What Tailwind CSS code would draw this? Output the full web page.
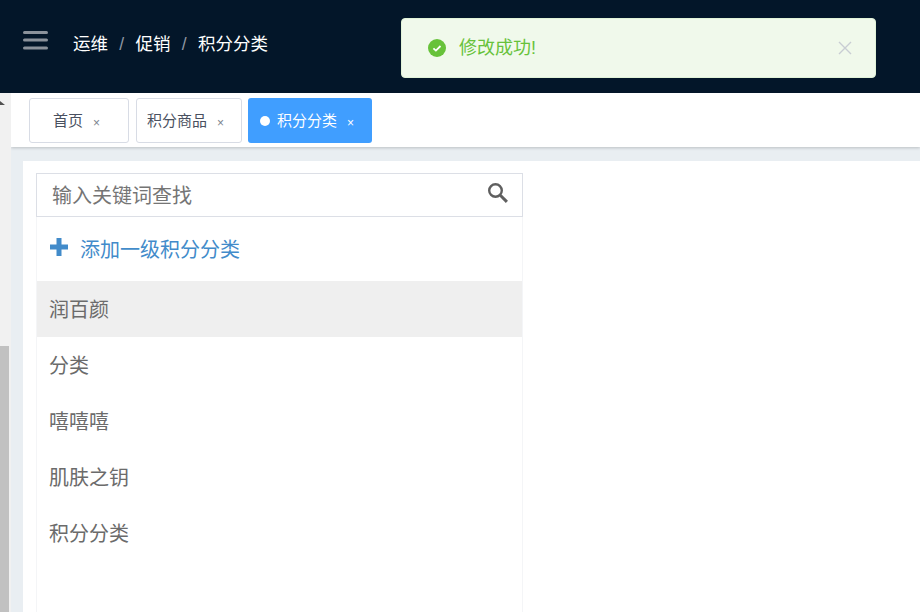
<!DOCTYPE html>
<html lang="zh-CN">
  <head>
    <meta charset="UTF-8" />
    <script src="https://cdn.jsdelivr.net/npm/@tailwindcss/browser@4"></script>
    <title>积分分类</title>
  </head>
  <body class="w-[920px] h-[612px] overflow-hidden bg-white font-['Liberation_Sans','Noto_Sans_CJK_SC',sans-serif]">
    <!-- Header -->
    <header class="relative h-[93px] bg-[#031629] flex items-start pt-[30px] pl-[23px]">
      <svg class="w-[25px] h-[20px] shrink-0" viewBox="0 0 25 20" fill="#8b929b">
        <rect x="0" y="1" width="25" height="3" rx="1.5" />
        <rect x="0" y="8.5" width="25" height="3" rx="1.5" />
        <rect x="0" y="16.5" width="25" height="3" rx="1.5" />
      </svg>
      <nav class="ml-[25px] mt-[2px] flex items-center h-[24px] text-[17.5px] text-white">
        <span>运维</span>
        <span class="text-[#8f98a3] w-[27.5px] text-center">/</span>
        <span>促销</span>
        <span class="text-[#8f98a3] w-[27.5px] text-center">/</span>
        <span>积分分类</span>
      </nav>
      <!-- Toast -->
      <div class="absolute left-[401px] top-[18px] w-[475px] h-[60px] rounded bg-[#f0f9eb] border border-[#e1f3d8] flex items-center pl-[26px] pr-[23px]">
        <svg class="w-[18px] h-[18px] shrink-0" viewBox="0 0 18 18">
          <circle cx="9" cy="9" r="9" fill="#67c23a" />
          <path d="M5.4 9.3l2.5 2.3 4.6-4.6" fill="none" stroke="#fff" stroke-width="1.8" />
        </svg>
        <span class="ml-[13px] text-[18px] leading-none text-[#67c23a]">修改成功!</span>
        <svg class="ml-auto w-[14px] h-[14px] shrink-0" viewBox="0 0 14 14" stroke="#c8cdd3" stroke-width="1.4">
          <path d="M1 1l12 12M13 1L1 13" />
        </svg>
      </div>
    </header>

    <div class="flex h-[519px]">
      <!-- Page scrollbar -->
      <div class="relative w-[11px] shrink-0 bg-[#f1f1f1]">
        <svg class="absolute left-0 top-[8px] w-[5px] h-[4px]" viewBox="0 0 5 4" fill="#505050">
          <path d="M0 4V0l5 4z" />
        </svg>
        <div class="absolute left-0 top-[253px] bottom-0 w-[9px] bg-[#c1c1c1]"></div>
      </div>

      <div class="flex-1 min-w-0 flex flex-col bg-[#e9eef2]">
        <!-- Tabs -->
        <div class="h-[54px] shrink-0 bg-white shadow-[0_1px_3px_rgba(0,0,0,0.2)] flex items-start pt-[5px] pl-[18px] gap-[7px] text-[15px]">
          <div class="w-[100px] h-[45px] rounded-[3px] border border-[#d8dce5] flex items-center pl-[23px] pt-[2px] text-[#495060]">
            <span>首页</span><span class="ml-[10px] text-[12px] translate-y-[1px] text-[#7b828e]">×</span>
          </div>
          <div class="w-[106px] h-[45px] rounded-[3px] border border-[#d8dce5] flex items-center pl-[10px] pt-[2px] text-[#495060]">
            <span>积分商品</span><span class="ml-[10px] text-[12px] translate-y-[1px] text-[#7b828e]">×</span>
          </div>
          <div class="w-[124px] h-[45px] -ml-[1px] rounded-[3px] bg-[#409eff] flex items-center pl-[12px] pt-[2px] text-white">
            <span class="w-[10px] h-[10px] rounded-full bg-white -translate-y-[1px]"></span>
            <span class="ml-[7px]">积分分类</span><span class="ml-[10px] text-[12px] translate-y-[1px]">×</span>
          </div>
        </div>

        <!-- Content -->
        <main class="flex-1 min-h-0 mt-[14px] ml-[12px] bg-white pt-[12px] pl-[13px]">
          <div class="w-[487px]">
            <div class="h-[44px] border border-[#dcdfe6] flex items-center pl-[15px] pr-[13px] pt-[1px] text-[#757575] text-[20px]">
              <span>输入关键词查找</span>
              <svg class="ml-auto w-[22px] h-[22px] -translate-y-[3px]" viewBox="0 0 22 22" fill="none" stroke="#5f5f5f">
                <circle cx="8.5" cy="8.5" r="6.3" stroke-width="2.4" />
                <path d="M13.3 13.3l6.6 6.6" stroke-width="3" />
              </svg>
            </div>
            <div class="h-[400px] border-x border-[#f4f5f7]">
              <div class="h-[64px] flex items-center pl-[12px] pt-[1px] text-[#428bca] text-[20px]">
                <svg class="w-[20px] h-[20px] shrink-0 -translate-y-[3px]" viewBox="0 0 20 20" fill="#428bca">
                  <path d="M7.5 1h5v6.5H19v5h-6.5V19h-5v-6.5H1v-5h6.5z" />
                </svg>
                <span class="ml-[11px]">添加一级积分分类</span>
              </div>
              <ul class="text-[20px] text-[#6b6b6b]">
                <li class="h-[56px] flex items-center pl-[12px] pt-[1px] bg-[#efefef]">润百颜</li>
                <li class="h-[56px] flex items-center pl-[12px] pt-[1px]">分类</li>
                <li class="h-[56px] flex items-center pl-[12px] pt-[1px]">嘻嘻嘻</li>
                <li class="h-[56px] flex items-center pl-[12px] pt-[1px]">肌肤之钥</li>
                <li class="h-[56px] flex items-center pl-[12px] pt-[1px]">积分分类</li>
              </ul>
            </div>
          </div>
        </main>
      </div>
    </div>
  </body>
</html>
